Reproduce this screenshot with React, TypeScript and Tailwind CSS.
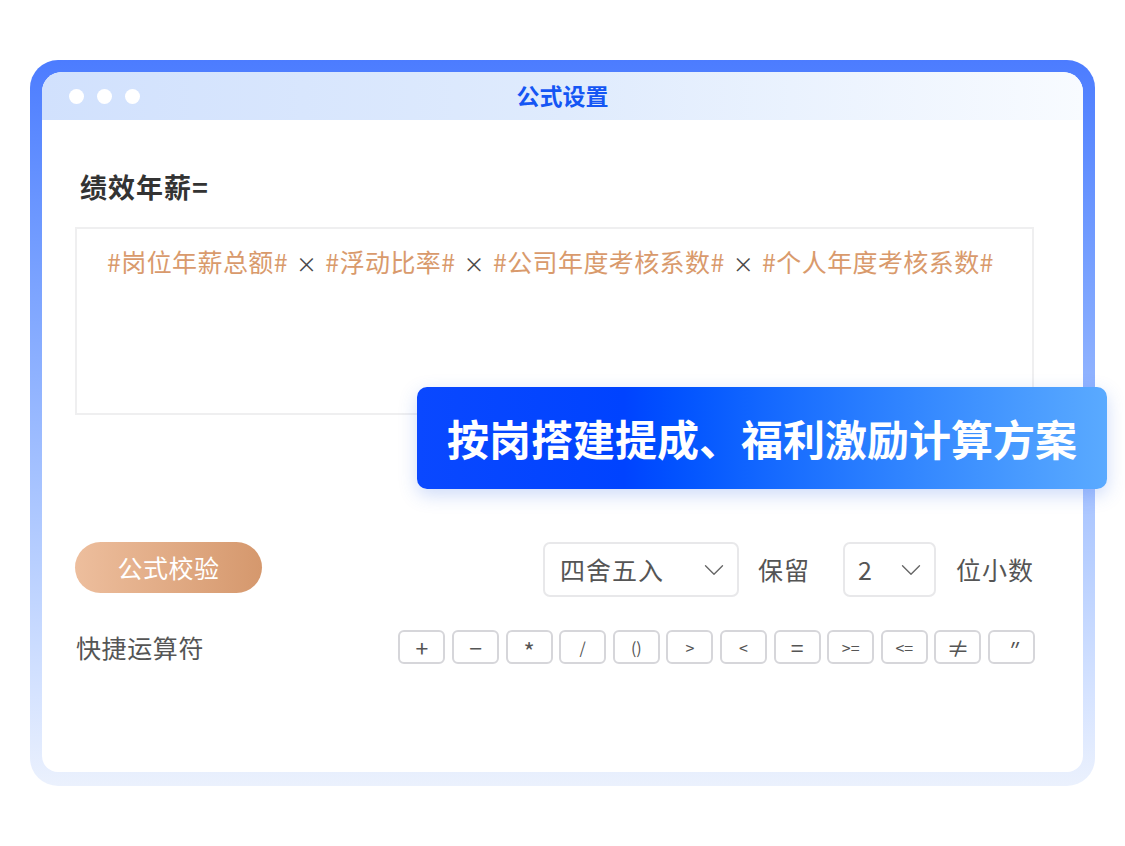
import { ChevronDown } from 'lucide-react';

const FONT = { fontFamily: '"Noto Sans CJK SC", "Noto Sans", sans-serif' };

const operators = ['+', '−', '*', '/', '()', '>', '<', '=', '>=', '<=', '≠', '″'];

function Select({ label, width, textPl }: { label: string; width: string; textPl: string }) {
  return (
    <div className={`flex h-[55px] items-center justify-between rounded-[7px] border-2 border-[#e8e8ea] bg-white pr-[6px] ${width} ${textPl}`}>
      <span className="text-[25px] leading-none text-[#555]">{label}</span>
      <ChevronDown className="h-[34px] w-[34px] text-[#666]" strokeWidth={0.95} />
    </div>
  );
}

function Formula() {
  const parts = ['#岗位年薪总额#', '#浮动比率#', '#公司年度考核系数#', '#个人年度考核系数#'];
  return (
    <div className="text-[25px] leading-[30px] tracking-[0.4px] whitespace-nowrap">
      {parts.map((p, i) => (
        <span key={p}>
          {i > 0 && <span className="mx-[8px] text-[21px] text-[#4a4a4a]">×</span>}
          <span className="text-[#d99a6c]">{p}</span>
        </span>
      ))}
    </div>
  );
}

function opClass(op: string) {
  if (op === '*') return 'text-[24px] translate-y-[4px]';
  if (op === '″') return 'text-[22px] italic translate-y-[2px]';
  if (['+', '−', '≠', '='].includes(op)) return 'text-[23px]';
  return 'text-[16px]';
}

export default function App() {
  return (
    <div className="min-h-[846px] w-[1125px] bg-white pl-[30px] pt-[60px]" style={FONT}>
      <div className="relative h-[726px] w-[1065px] rounded-[28px] bg-gradient-to-b from-[#4c7cff] to-[#ebf1fd] px-3 pt-3 pb-[14px]">
        <div className="flex h-full flex-col overflow-hidden rounded-t-[20px] rounded-b-[16px] bg-white">
          {/* title bar */}
          <div className="relative flex h-12 shrink-0 items-center bg-gradient-to-r from-[#d1e1fd] via-[#dfebfd] to-[#f8fbff]">
            <div className="flex gap-[13px] pl-[27px]">
              <span className="h-[15px] w-[15px] rounded-full bg-white" />
              <span className="h-[15px] w-[15px] rounded-full bg-white" />
              <span className="h-[15px] w-[15px] rounded-full bg-white" />
            </div>
            <div className="absolute inset-0 flex items-center justify-center pb-px text-[23px] font-semibold text-[#1456f4]">公式设置</div>
          </div>

          <div className="flex flex-col pl-[33px] pr-[49px] pt-[49px]">
            <div className="pl-[5px] text-[27px] font-semibold leading-[36px] tracking-[1px] text-[#333]">绩效年薪=</div>

            <div className="mt-[22px] h-[188px] border-2 border-[#efeff0] pl-[30px] pt-[17px]">
              <Formula />
            </div>

            <div className="mt-[127px] flex items-start justify-between">
              <button className="flex h-[51px] w-[187px] items-center justify-center rounded-full bg-gradient-to-r from-[#edbe9d] to-[#d5986d] text-[25px] tracking-[0.5px] text-white">
                公式校验
              </button>
              <div className="flex items-center text-[25px] tracking-[1px] text-[#555]">
                <Select label="四舍五入" width="w-[196px]" textPl="pl-[15px]" />
                <span className="ml-[19px]">保留</span>
                <div className="ml-[33px]">
                  <Select label="2" width="w-[93px]" textPl="pl-[13px]" />
                </div>
                <span className="ml-[20px]">位小数</span>
              </div>
            </div>

            <div className="mt-[33px] flex items-center justify-between">
              <span className="pl-px text-[25px] leading-[34px] tracking-[0.6px] text-[#555]">快捷运算符</span>
              <div className="-mr-px flex gap-[6.6px]">
                {operators.map(op => (
                  <div
                    key={op}
                    className="flex h-[34px] w-[47px] items-center justify-center rounded-[6px] border-2 border-[#d6d6da] text-[#555]"
                  >
                    <span className={`leading-none ${opClass(op)}`}>{op}</span>
                  </div>
                ))}
              </div>
            </div>
          </div>
        </div>

        {/* highlight banner */}
        <div className="absolute left-[387px] top-[327px] flex h-[102px] w-[690px] items-center justify-center rounded-[10px] bg-gradient-to-r from-[#0a48ff] via-[#0043ff] via-30% to-[#5aaaff] shadow-[0_6px_18px_rgba(60,110,230,0.25)]">
          <span className="text-[42px] font-bold leading-none text-white">按岗搭建提成、福利激励计算方案</span>
        </div>
      </div>
    </div>
  );
}
